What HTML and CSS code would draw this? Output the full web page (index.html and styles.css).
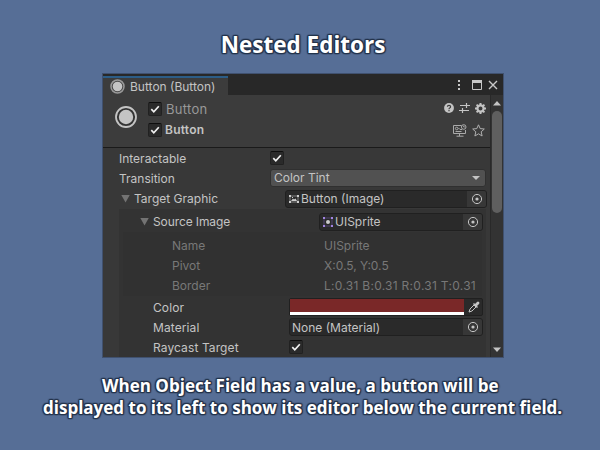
FILE: index.html
```html
<!DOCTYPE html>
<html lang="en">
<head>
<meta charset="utf-8">
<title>Nested Editors</title>
<link rel="stylesheet" href="styles.css">
</head>
<body>
<svg class="defs" aria-hidden="true">
  <symbol id="check" viewBox="0 0 14 14"><path d="M3.3 7.2 L5.8 9.8 L10.8 4.3" fill="none" stroke="#f0f0f0" stroke-width="1.7"/></symbol>
  <symbol id="radio" viewBox="0 0 24 24"><circle cx="12" cy="12" r="10" fill="#333" stroke="#c4c4c4" stroke-width="1.800"/><circle cx="12" cy="12" r="7.2" fill="#c4c4c4"/></symbol>
  <symbol id="radio-small" viewBox="0 0 15 15"><circle cx="7.500" cy="7.500" r="6.500" fill="#444" stroke="#999" stroke-width="1.500"/><circle cx="7.500" cy="7.500" r="4.800" fill="#c4c4c4"/></symbol>
  <symbol id="picker" viewBox="0 0 12 12"><circle cx="6" cy="6" r="4.6" fill="none" stroke="#c4c4c4" stroke-width="1"/><circle cx="6" cy="6" r="1.6" fill="#c4c4c4"/></symbol>
</svg>
<h1 class="title"><span>Nested Editors</span></h1>
<main class="window">
  <div class="tabbar">
    <div class="tab"><svg class="tab-icon"><use href="#radio-small"/></svg><span>Button (Button)</span></div>
    <div class="window-actions">
      <svg width="4" height="12" viewBox="0 0 4 12" fill="#c8c8c8"><path d="M1 1h2v2H1zM1 5h2v2H1zM1 9h2v2H1z"/></svg>
      <svg width="10" height="10" viewBox="0 0 10 10"><path d="M.5.5h9v9h-9z" fill="none" stroke="#c8c8c8"/><path d="M0 0h10v3H0z" fill="#c8c8c8"/></svg>
      <svg width="10" height="10" viewBox="0 0 10 10"><path d="M1 1l8 8M9 1L1 9" stroke="#c8c8c8" stroke-width="1.4"/></svg>
    </div>
  </div>
  <div class="body">
    <div class="content">
      <header class="header">
        <svg class="big-icon"><use href="#radio"/></svg>
        <div class="names">
          <div class="name-row"><span class="checkbox"><svg><use href="#check"/></svg></span><span class="type">Button</span></div>
          <div class="name-row"><span class="checkbox"><svg><use href="#check"/></svg></span><b class="name">Button</b></div>
        </div>
        <div class="tools">
          <div class="tool-row">
            <svg width="10" height="10" viewBox="0 0 10 10"><circle cx="5" cy="5" r="4.9" fill="#c4c4c4"/><path d="M3.4 3.8Q3.4 2.3 5 2.3Q6.6 2.3 6.6 3.7Q6.6 4.5 5.7 5Q5 5.4 5 6.2M5 7v1.2" fill="none" stroke="#3c3c3c" stroke-width="1.2"/></svg>
            <svg width="11" height="10" viewBox="0 0 11 10"><path d="M1 2.500h6M8 2.500h3M7.500 0v5M0 7.500h3M4 7.500h6M3.500 5v5" fill="none" stroke="#c4c4c4" stroke-width="1.2"/></svg>
            <svg width="11" height="11" viewBox="0 0 11 11"><path d="M5.5 0v11M0 5.5h11M1.6 1.6l7.8 7.8M9.4 1.6L1.6 9.4" stroke="#c4c4c4" stroke-width="2"/><circle cx="5.5" cy="5.5" r="3.1" fill="#3c3c3c" stroke="#c4c4c4" stroke-width="2.200"/></svg>
          </div>
          <div class="tool-row second">
            <svg width="14" height="13" viewBox="0 0 14 13" fill="none" stroke="#aaa" stroke-width="1"><path d="M8.5 1.5H.5v8h12V6M6.5 10v2M3.5 12.2h7M2.500 7.500h6"/><circle cx="10.7" cy="3" r="2.3"/><circle cx="3.700" cy="4.500" r="1.300"/><path d="M10.7 1.7V3h1M5.500 4l1.500 1.500L9 5.500"/></svg>
            <svg width="13" height="13" viewBox="0 0 13 13"><path d="M6.5.8l1.7 3.8 4.1.4-3.1 2.8.9 4.2-3.6-2.2L2.900 12l.9-4.200L.7 5l4.100-.4z" fill="none" stroke="#b0b0b0"/></svg>
          </div>
        </div>
      </header>
      <section class="fields">
        <div class="row"><label>Interactable</label><span class="checkbox"><svg><use href="#check"/></svg></span></div>
        <div class="row"><label>Transition</label><div class="dropdown"><span class="tint">Color Tint</span><svg width="8" height="4" viewBox="0 0 8 4"><path d="M0 0h8L4 4z" fill="#c4c4c4"/></svg></div></div>
        <div class="row target"><label><i class="fold"></i><span>Target Graphic</span></label>
          <div class="object"><svg class="type-icon" viewBox="0 0 10 8"><path d="M1 1h8v6H1z" fill="none" stroke="#aaa" stroke-width=".7"/><path d="M0 0h2v2H0zM8 0h2v2H8zM0 6h2v2H0zM8 6h2v2H8zM2 6l2-2.500 1 1L6.500 3.500 8 6zM3 2h1v1H3z" fill="#ccc"/></svg><span class="image-value">Button (Image)</span><span class="pick"><svg><use href="#picker"/></svg></span></div></div>
        <div class="nested">
          <div class="row source"><label><i class="fold"></i><span>Source Image</span></label>
            <div class="object"><svg class="type-icon" viewBox="0 0 10 10"><path d="M1 1h8v8H1z" fill="none" stroke="#5c4b80" stroke-width=".8"/><path d="M0 0h2v2H0zM8 0h2v2H8zM0 8h2v2H0zM8 8h2v2H8z" fill="#a184e0"/><circle cx="5" cy="5" r="2" fill="#ccc"/></svg><span>UISprite</span><span class="pick"><svg><use href="#picker"/></svg></span></div></div>
          <div class="sprite">
            <div class="row"><label>Name</label><span>UISprite</span></div>
            <div class="row"><label>Pivot</label><span>X:0.5, Y:0.5</span></div>
            <div class="row"><label>Border</label><span class="border-value">L:0.31 B:0.31 R:0.31 T:0.31</span></div>
          </div>
          <div class="row image-row"><label>Color</label><div class="color"><div class="swatch"></div><svg width="12" height="12" viewBox="0 0 12 12"><path d="M1 11l1-3 4-4 2 2-4 4z" fill="none" stroke="#c4c4c4"/><path d="M5 3l4 4 1-1-1-1 2-2q1-1 0-2t-2 0L7 3 6 2z" fill="#c4c4c4"/></svg></div></div>
          <div class="row image-row"><label>Material</label><div class="object"><span class="none">None (Material)</span><span class="pick"><svg><use href="#picker"/></svg></span></div></div>
          <div class="row image-row"><label>Raycast Target</label><span class="checkbox"><svg><use href="#check"/></svg></span></div>
        </div>
      </section>
    </div>
    <aside class="scrollbar">
      <svg width="8" height="5" viewBox="0 0 8 5"><path d="M0 4.500h8L4 0z" fill="#c4c4c4"/></svg>
      <div class="thumb"></div>
      <svg width="8" height="5" viewBox="0 0 8 5"><path d="M0 .5h8L4 5z" fill="#c4c4c4"/></svg>
    </aside>
  </div>
</main>
<p class="caption"><span class="line-one">When Object Field has a value, a button will be</span><span class="line-two">displayed to its left to show its editor below the current field.</span></p>
</body>
</html>
```

FILE: styles.css
```css
* { box-sizing: border-box; }
body { margin: 0; width: 600px; height: 450px; overflow: hidden; background: #566e96; font-family: Inter, "Liberation Sans", sans-serif; font-size: 12px; color: #c4c4c4; display: flex; flex-direction: column; }
.defs { position: absolute; width: 0; height: 0; }
svg { display: block; flex: none; }
.title, .caption { margin: 0; font-family: "Open Sans", "Noto Sans", sans-serif; font-weight: 700; color: #fff; white-space: nowrap; text-shadow: 1px 0 1px #26344c, -1px 0 1px #26344c, 0 1px 1px #26344c, 0 -1px 1px #26344c, 1px 1px 1px #26344c, -1px -1px 1px #26344c, 1px -1px 1px #26344c, -1px 1px 1px #26344c, 0 0 2px #26344c; }
.title { height: 74px; padding-top: 29px; padding-left: 6px; font-size: 22.500px; line-height: 32px; text-align: center; letter-spacing: 0; }
.window { width: 400px; height: 283px; margin-left: 103px; background: #383838; overflow: hidden; white-space: nowrap; outline: 1px solid #40516f; }
.tabbar { height: 21px; display: flex; justify-content: space-between; background: #282828; padding-top: 2px; }
.tab { width: 125px; height: 19px; background: #3c3c3c; border-top: 2px solid #2c5d87; padding: 0 0 1px 7px; display: flex; align-items: center; gap: 5px; }
.tab-icon { width: 15px; height: 15px; }
.window-actions { display: flex; align-items: center; gap: 11px; padding-right: 5px; height: 17px; }
.window-actions svg:last-child { margin-left: -5px; }
.body { display: flex; height: 262px; }
.content { width: 387px; flex: none; }
.header { height: 53px; background: #3c3c3c; border-bottom: 1px solid #1a1a1a; display: flex; }
.big-icon { width: 24px; height: 24px; margin: 10px 0 0 11px; }
.names { margin: 3px 0 0 10px; }
.name-row { height: 21px; display: flex; align-items: center; }
.checkbox { width: 14px; height: 14px; flex: none; background: #2a2a2a; border: 1px solid #212121; border-top-color: #0d0d0d; border-radius: 2px; }
.checkbox svg { width: 14px; height: 14px; margin: -1px; }
.type { margin-left: 4px; color: #999; font-size: 13px; letter-spacing: .3px; }
.name { margin-left: 3px; font-size: 12px; font-weight: 600; letter-spacing: .25px; }
.tools { margin-left: auto; padding: 7px 4px 0 0; }
.tool-row { display: flex; align-items: center; justify-content: flex-end; gap: 5px; height: 12px; }
.second { margin-top: 10px; height: 13px; padding-right: 1px; gap: 5px; }
.fields { padding: 0 0 0 16px; }
.row { display: flex; align-items: center; height: 20px; }
.row label { width: 151px; flex: none; display: flex; align-items: center; letter-spacing: 0; }
.dropdown { width: 216px; height: 18px; display: flex; align-items: center; justify-content: space-between; padding: 0 5px 1px 3px; background: #515151; border: 1px solid #303030; border-radius: 3px; }
.row.target { height: 21px; }
.row.target label { width: 166px; }
.fold { width: 9px; height: 8px; margin: 0 4px 0 2px; background: #737373; clip-path: polygon(0 0, 100% 0, 50% 100%); }
.object { height: 18px; width: 202px; display: flex; align-items: center; background: #2a2a2a; border: 1px solid #202020; border-radius: 3px; padding-left: 3px; }
.type-icon { width: 10px; height: 10px; margin-right: 2px; }
.pick { width: 19px; height: 16px; display: grid; place-items: center; margin-left: auto; background: #373737; border-radius: 0 2px 2px 0; }
.pick svg { width: 12px; height: 12px; }
.nested { background: #333; width: 367px; height: 148px; }
.source { height: 23px; padding: 2px 0 0 19px; }
.row.source label { width: 181px; letter-spacing: -.1px; }
.source .object { width: 164px; }
.sprite { margin-left: 4px; width: 359px; height: 64px; padding: 3px 0 0 49px; background: #313131; color: #787878; }
.sprite .row label { width: 152px; }
.border-value { letter-spacing: .28px; }
.row.image-row { padding-left: 34px; }
.row.image-row label { width: 136px; letter-spacing: .1px; }
.image-row .object, .color { width: 194px; }
.image-row .object { padding-left: 2px; }
.sprite + .image-row { height: 20px; margin-top: 1px; }
.color { height: 18px; display: flex; align-items: center; background: #2a2a2a; border: 1px solid #202020; border-radius: 2px; gap: 4px; }
.swatch { width: 174px; height: 16px; background: #7a2828; border-bottom: 3px solid #fff; }
.scrollbar { width: 13px; background: #333; border-left: 1px solid #292929; display: flex; flex-direction: column; align-items: center; padding: 6px 0 5px; }
.thumb { width: 10px; height: 102px; margin: 5px 0 auto; background: #5f5f5f; border-radius: 5px; }
.caption { font-size: 17px; line-height: 22px; padding-top: 18px; }
.caption span { display: block; }
.line-one { padding-left: 102px; letter-spacing: .02px; }
.line-two { padding-left: 43px; }
```
